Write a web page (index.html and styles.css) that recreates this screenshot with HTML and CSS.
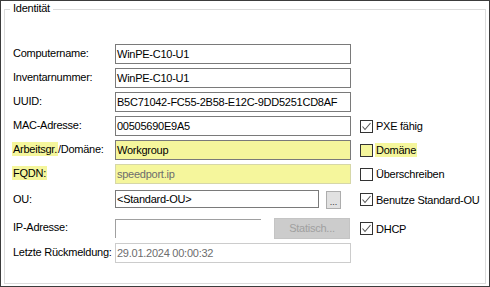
FILE: index.html
```html
<!DOCTYPE html>
<html lang="de">
<head>
<meta charset="utf-8">
<title>Identität</title>
<link rel="stylesheet" href="styles.css">
</head>
<body>
<div class="window">
  <div class="group">
    <span class="legend">Identität</span>
    <div class="row r-first">
      <div class="label">Computername:</div>
      <div class="field">WinPE-C10-U1</div>
    </div>
    <div class="row">
      <div class="label">Inventarnummer:</div>
      <div class="field">WinPE-C10-U1</div>
    </div>
    <div class="row">
      <div class="label">UUID:</div>
      <div class="field">B5C71042-FC55-2B58-E12C-9DD5251CD8AF</div>
    </div>
    <div class="row">
      <div class="label">MAC-Adresse:</div>
      <div class="field">00505690E9A5</div>
      <div class="check"><span class="box"><svg viewBox="0 0 11 11" width="11" height="11"><polyline points="1.5,5.5 4,8.5 9.5,2" fill="none" stroke="#555" stroke-width="1.1"/></svg></span><span class="ctext">PXE fähig</span></div>
    </div>
    <div class="row">
      <div class="label"><span class="hl">Arbeitsgr.</span>/Domäne:</div>
      <div class="field yellow">Workgroup</div>
      <div class="check"><span class="box ybox"></span><span class="ctext hl">Domäne</span></div>
    </div>
    <div class="row">
      <div class="label"><span class="hl">FQDN:</span></div>
      <div class="field yellow disabled">speedport.ip</div>
      <div class="check"><span class="box"></span><span class="ctext">Überschreiben</span></div>
    </div>
    <div class="row r-ou">
      <div class="label">OU:</div>
      <div class="split">
        <div class="field ou">&lt;Standard-OU&gt;</div>
        <div class="dots">...</div>
      </div>
      <div class="check"><span class="box"><svg viewBox="0 0 11 11" width="11" height="11"><polyline points="1.5,5.5 4,8.5 9.5,2" fill="none" stroke="#555" stroke-width="1.1"/></svg></span><span class="ctext">Benutze Standard-OU</span></div>
    </div>
    <div class="row r-ip">
      <div class="label">IP-Adresse:</div>
      <div class="split">
        <div class="ipfield"></div>
        <div class="static">Statisch...</div>
      </div>
      <div class="check"><span class="box"><svg viewBox="0 0 11 11" width="11" height="11"><polyline points="1.5,5.5 4,8.5 9.5,2" fill="none" stroke="#555" stroke-width="1.1"/></svg></span><span class="ctext">DHCP</span></div>
    </div>
    <div class="row r-last">
      <div class="label">Letzte Rückmeldung:</div>
      <div class="field readonly">29.01.2024 00:00:32</div>
    </div>
  </div>
</div>
</body>
</html>
```
FILE: styles.css
```css
html, body {
  margin: 0;
  padding: 0;
  background: #fff;
}
body {
  font-family: "Liberation Sans", Arial, sans-serif;
  font-size: 11px;
  letter-spacing: -0.25px;
  color: #000;
}
.window {
  width: 490px;
  height: 287px;
  box-sizing: border-box;
  border: 1px solid #3c3c3c;
  background: #fff;
  padding: 8px 3px 2px 3px;
}
.group {
  position: relative;
  height: 100%;
  box-sizing: border-box;
  border: 1px solid #dcdcdc;
  padding: 34px 0 0 8px;
}
.legend {
  position: absolute;
  left: 5px;
  top: -8px;
  line-height: 13px;
  padding: 0 3px;
  background: #fff;
}
.row {
  display: grid;
  grid-template-columns: 102px 236px auto;
  align-items: center;
  height: 20px;
  margin-top: 4px;
}
.r-first { margin-top: 0; }
.r-ou { height: 19px; margin-top: 6px; }
.r-ip { height: 21px; margin-top: 9px; }
.r-last { margin-top: 4px; }
.label {
  line-height: 18px;
  align-self: start;
  white-space: nowrap;
}
.hl {
  background: #f5f69c;
  padding: 0 1px;
  margin-left: -1px;
  line-height: 14px;
  display: inline-block;
}
.field {
  height: 20px;
  box-sizing: border-box;
  border: 1px solid #7a7a7a;
  padding: 0 2px 0 1px;
  line-height: 18px;
  white-space: nowrap;
  overflow: hidden;
}
.yellow { background: #f5f69c; }
.disabled { border-color: #d6d7a8; color: #6d6d6d; }
.readonly { border-color: #cccccc; color: #6d6d6d; }
.split {
  display: flex;
  align-items: flex-start;
  justify-content: space-between;
  height: 100%;
}
.field.ou {
  width: 204px;
  height: 18px;
  line-height: 16px;
}
.dots {
  width: 15px;
  height: 18px;
  box-sizing: border-box;
  margin: 1px 10px 0 0;
  background: #e1e1e1;
  border: 1px solid #adadad;
  font-size: 9px;
  line-height: 20px;
  text-align: center;
  letter-spacing: 0;
  color: #333;
  overflow: hidden;
}
.ipfield {
  width: 146px;
  height: 19px;
  margin-top: 1px;
  box-sizing: border-box;
  border-top: 1px solid #a0a0a0;
  border-left: 1px solid #a0a0a0;
}
.static {
  width: 76px;
  height: 21px;
  box-sizing: border-box;
  margin-right: 1px;
  background: #cccccc;
  border: 1px solid #c4c4c4;
  color: #a0a0a0;
  line-height: 19px;
  text-align: center;
}
.check {
  display: flex;
  align-items: center;
  white-space: nowrap;
  margin-left: 9px;
}
.box {
  width: 13px;
  height: 13px;
  box-sizing: border-box;
  border: 1px solid #333;
  background: #fff;
  display: flex;
  align-items: center;
  justify-content: center;
}
.box svg { display: block; }
.ybox { background: #f5f69c; }
.ctext {
  margin-left: 3px;
  line-height: 14px;
}
.ctext.hl { margin-left: 2px; }
```
